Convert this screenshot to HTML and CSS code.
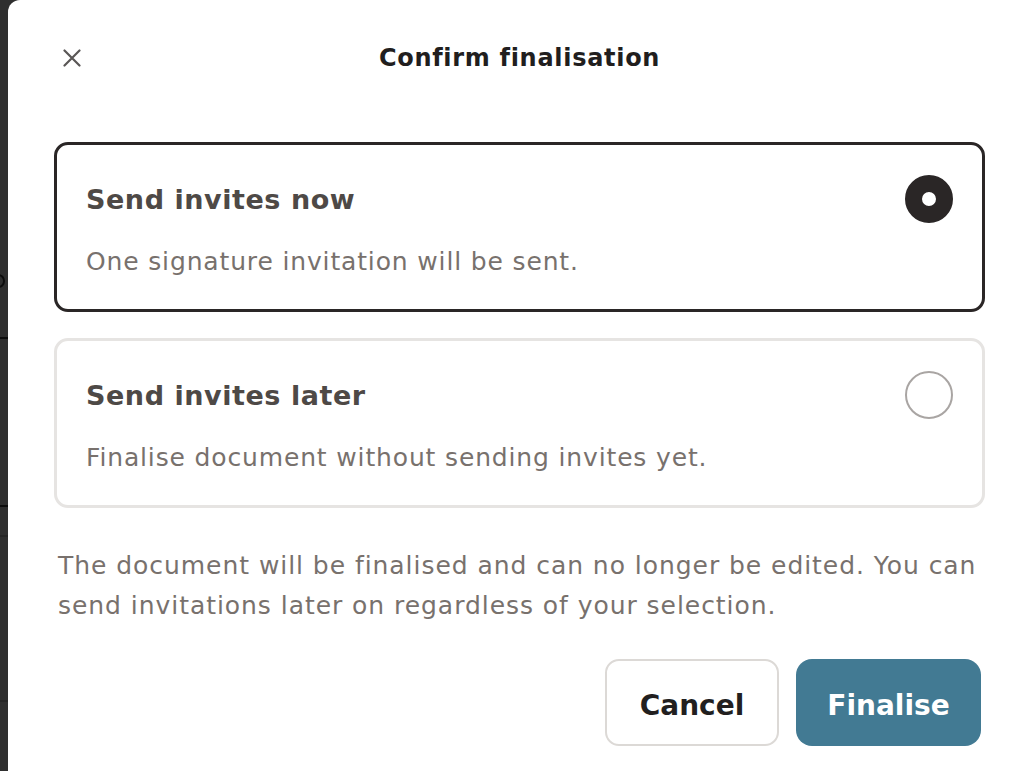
FILE: index.html
```html
<!DOCTYPE html>
<html lang="en">
<head>
<meta charset="utf-8">
<title>Confirm finalisation</title>
<link rel="stylesheet" href="styles.css">
</head>
<body>
<div class="backdrop">
  <span class="bd-ring"></span>
  <div class="bd-line bd-line-1"></div>
  <div class="bd-line bd-line-2"></div>
  <div class="bd-line bd-line-3"></div>
  <div class="bd-line bd-line-4"></div>
</div>
<div class="modal">
  <header class="modal-header">
    <button class="close-btn" aria-label="Close">
      <svg width="18" height="18" viewBox="0 0 18 18"><path d="M1.5 1.5 L16.5 16.5 M16.5 1.5 L1.5 16.5" stroke="#5a5756" stroke-width="2.2" stroke-linecap="round" fill="none"/></svg>
    </button>
    <h1 class="modal-title">Confirm finalisation</h1>
    <span class="header-spacer"></span>
  </header>
  <div class="options">
    <div class="option option-selected">
      <div class="option-head">
        <span class="option-title">Send invites now</span>
        <span class="radio radio-on"></span>
      </div>
      <p class="option-desc">One signature invitation will be sent.</p>
    </div>
    <div class="option">
      <div class="option-head">
        <span class="option-title">Send invites later</span>
        <span class="radio"></span>
      </div>
      <p class="option-desc">Finalise document without sending invites yet.</p>
    </div>
  </div>
  <p class="note">The document will be finalised and can no longer be edited. You can send invitations later on regardless of your selection.</p>
  <div class="actions">
    <button class="btn btn-secondary">Cancel</button>
    <button class="btn btn-primary">Finalise</button>
  </div>
</div>
</body>
</html>
```
FILE: styles.css
```css
* { box-sizing: border-box; }
html, body { margin: 0; padding: 0; }
body {
  background: #2f2f2f;
  height: 771px;
  overflow: hidden;
  display: flex;
  font-family: "DejaVu Sans", "Noto Sans", sans-serif;
}
.backdrop {
  flex: 0 0 8px;
  position: relative;
  background: #2f2f2f;
  overflow: hidden;
}
.bd-ring {
  position: absolute;
  top: 274px;
  left: -8px;
  width: 13px;
  height: 14px;
  border: 2px solid #0c0c0c;
  border-radius: 50%;
}
.bd-line { position: absolute; left: 0; right: 0; height: 2px; background: #0e0e0e; }
.bd-line-1 { top: 337px; }
.bd-line-2 { top: 505px; }
.bd-line-3 { top: 535px; background: #262626; }
.bd-line-4 { top: 700px; background: #262626; }

.modal {
  flex: 0 0 1023px;
  background: #ffffff;
  border-radius: 12px 12px 0 0;
  padding: 34px 46px 0 46px;
}
.modal-header {
  display: grid;
  grid-template-columns: 1fr auto 1fr;
  align-items: center;
  height: 48px;
}
.close-btn {
  width: 36px;
  height: 36px;
  border: 0;
  background: none;
  padding: 0;
  display: flex;
  align-items: center;
  justify-content: center;
  cursor: pointer;
}
.modal-title {
  margin: 0;
  font-size: 24px;
  font-weight: 700;
  color: #211e1e;
  letter-spacing: 0.7px;
  line-height: 44px;
}
.options {
  display: flex;
  flex-direction: column;
  gap: 26px;
  margin-top: 60px;
}
.option {
  border: 3px solid #e6e4e2;
  border-radius: 14px;
  padding: 34px 29px 29px 29px;
  height: 170px;
}
.option-selected { border-color: #2a2626; }
.option-head {
  display: flex;
  align-items: center;
  justify-content: space-between;
  height: 40px;
}
.option-title {
  font-size: 27px;
  font-weight: 700;
  color: #4e4946;
  letter-spacing: 0.55px;
}
.radio {
  width: 48px;
  height: 48px;
  border-radius: 50%;
  border: 2px solid #a9a5a3;
}
.radio-on {
  border: 17px solid #2a2626;
  background: #fff;
}
.option-desc {
  margin: 25px 0 0 0;
  font-size: 25px;
  line-height: 36px;
  letter-spacing: 0.85px;
  color: #78716d;
}
.note {
  margin: 38px 0 0 4px;
  font-size: 25px;
  line-height: 40px;
  letter-spacing: 0.95px;
  color: #78716d;
}
.actions {
  display: flex;
  justify-content: flex-end;
  gap: 17px;
  margin: 33px 4px 0 0;
}
.btn {
  height: 87px;
  border-radius: 14px;
  font-family: inherit;
  font-size: 28px;
  font-weight: 700;
  padding: 5px 0 0 0;
  cursor: pointer;
}
.btn-secondary {
  width: 174px;
  background: #fff;
  border: 2px solid #dcd9d6;
  color: #221f1f;
}
.btn-primary {
  width: 185px;
  background: #427a93;
  border: 0;
  color: #ffffff;
  border-radius: 16px;
}
```
